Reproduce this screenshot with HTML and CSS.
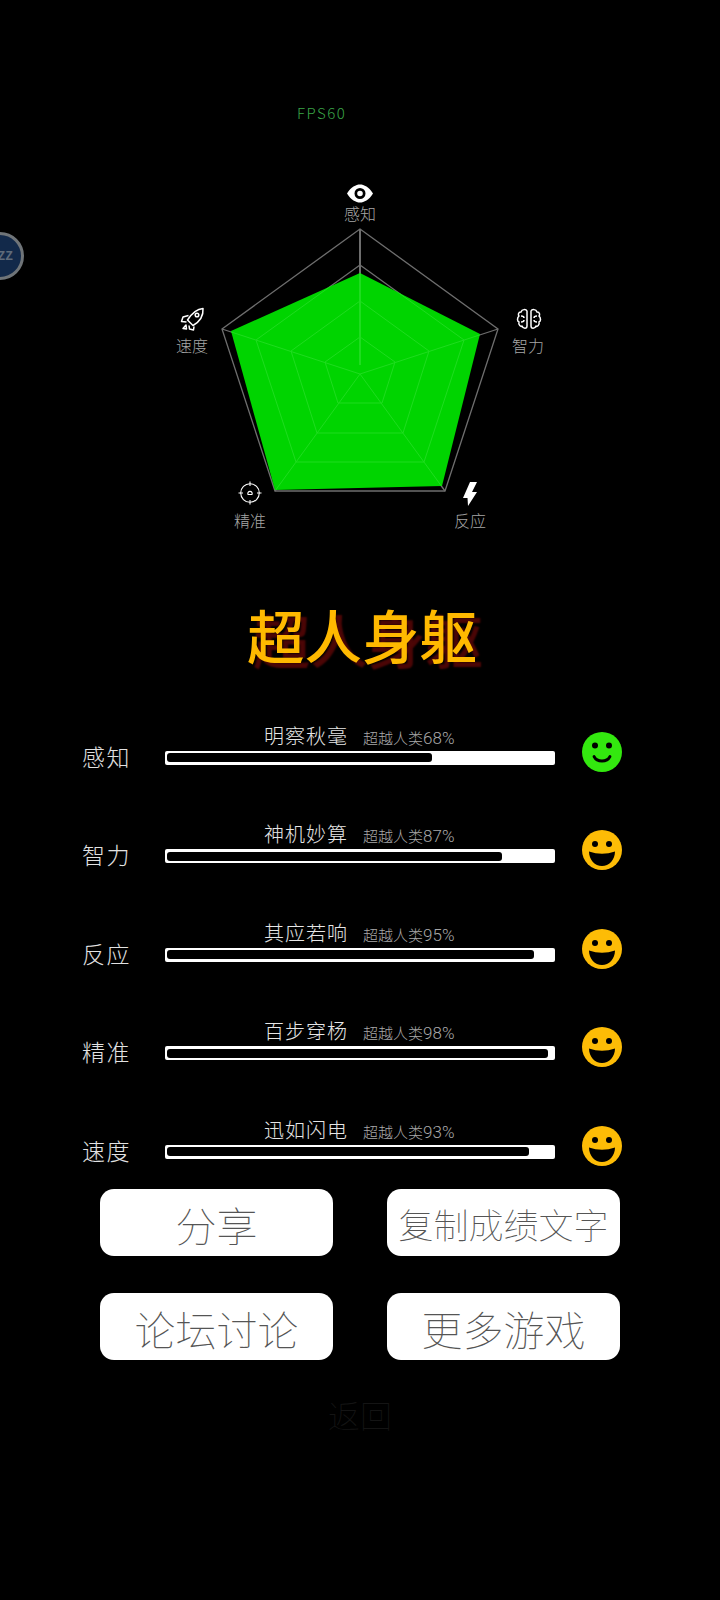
FILE: index.html
```html
<!DOCTYPE html>
<html lang="zh">
<head>
<meta charset="utf-8">
<title>超人身躯</title>
<link rel="stylesheet" href="styles.css">
</head>
<body>
<main class="screen">
  <div class="float-ball"><span class="float-text">ZZ</span></div>
  <div class="fps">FPS60</div>

  <svg class="radar" width="400" height="370" viewBox="160 170 400 370" xmlns="http://www.w3.org/2000/svg">
    <defs>
      <clipPath id="area"><polygon points="360,273 480,334 442,486 275,490 231,331"/></clipPath>
      <g id="grid">
        <polygon points="360,229 498,329 445,491 275,491 222,329"/>
        <polygon points="360,265 464,340 424,462 296,462 256,340"/>
        <polygon points="360,301 429,351 403,433 317,433 291,351"/>
        <polygon points="360,337 395,362 382,403 338,403 325,362"/>
        <path d="M360 374L498 329M360 374L445 491M360 374L275 491M360 374L222 329"/>
        <path class="spoke-top" d="M360 229V365"/>
      </g>
    </defs>
    <use href="#grid" class="grid-grey"/>
    <polygon class="area" points="360,273 480,334 442,486 275,490 231,331"/>
    <g clip-path="url(#area)"><use href="#grid" class="grid-green"/></g>

    <!-- eye -->
    <path class="ico-fill" fill-rule="evenodd" d="M347 193.500C351 187 356 184.500 360 184.500C364 184.500 369 187 373 193.500C369 200 364 202.500 360 202.500C356 202.500 351 200 347 193.500ZM360 188A5.500 5.500 0 1 0 360 199A5.500 5.500 0 1 0 360 188ZM360 190.700A2.800 2.800 0 1 1 360 196.300A2.800 2.800 0 1 1 360 190.700Z"/>
    <text class="axis" x="360" y="220">感知</text>

    <!-- brain -->
    <g class="ico-line">
      <path d="M527 311C526 309 522 309 521 312C518 312 518 315 519 316C517 318 517 321 519 322C518 325 521 327 522 326C523 329 527 329 527 326Z"/>
      <path d="M531 311C532 309 536 309 537 312C540 312 540 315 539 316C541 318 541 321 539 322C540 325 537 327 536 326C535 329 531 329 531 326Z"/>
      <path d="M521 316C523 316 524 317 524 318M537 316C535 316 534 317 534 318M521 322C523 322 524 321 524 320M537 322C535 322 534 321 534 320"/>
    </g>
    <text class="axis" x="528" y="352">智力</text>

    <!-- bolt -->
    <path class="ico-fill" d="M470 482H477L472 492H477L468 506L467.500 498H463Z"/>
    <text class="axis" x="470" y="527">反应</text>

    <!-- target -->
    <g class="ico-line thin">
      <circle cx="250" cy="493" r="9.300"/>
      <path d="M248 494.500A2.200 2.200 0 1 1 252 494.500Z"/>
      <path d="M250 481.500V486M250 500V504.500M238.500 493H243M257 493H261.500"/>
    </g>
    <text class="axis" x="250" y="527">精准</text>

    <!-- rocket -->
    <g class="ico-line">
      <path d="M203 308.500C197 309 192 313 187.500 320L193 325.500C200 321.500 203.500 315 203 308.500Z"/>
      <circle cx="197" cy="315" r="1.800"/>
      <path d="M188.500 315.500L183 317L181.500 321.500L186.500 322M194 326.500L193.500 330L189.500 329L189 325.500"/>
      <path d="M186 325L183 328.500L186.500 329Z"/>
    </g>
    <text class="axis" x="192" y="352">速度</text>
  </svg>

  <h1 class="title">超人身躯</h1>

  <section class="rows">
    <div class="row">
      <div class="row-label">感知</div>
      <div class="row-body">
        <div class="caption"><span class="cap-title">明察秋毫</span><span class="cap-sub">超越人类<span class="cap-num">68%</span></span></div>
        <div class="track"><div class="fill" style="width:68%"></div></div>
      </div>
      <svg class="face" viewBox="0 0 40 40"><circle class="face-green" cx="20" cy="20" r="20"/><circle cx="13" cy="13.500" r="3"/><circle cx="27" cy="13.500" r="3"/><path class="smile" d="M12 24.500C15 30.500 25 30.500 28 24.500"/></svg>
    </div>
    <div class="row">
      <div class="row-label">智力</div>
      <div class="row-body">
        <div class="caption"><span class="cap-title">神机妙算</span><span class="cap-sub">超越人类<span class="cap-num">87%</span></span></div>
        <div class="track"><div class="fill" style="width:86%"></div></div>
      </div>
      <svg class="face" viewBox="0 0 40 40"><circle class="face-yellow" cx="20" cy="20" r="20"/><circle cx="13" cy="14" r="3"/><circle cx="27" cy="14" r="3"/><path d="M7 21.500Q20 26 33 21.500C33 30 27 36 20 36C13 36 7 30 7 21.500Z"/></svg>
    </div>
    <div class="row">
      <div class="row-label">反应</div>
      <div class="row-body">
        <div class="caption"><span class="cap-title">其应若响</span><span class="cap-sub">超越人类<span class="cap-num">95%</span></span></div>
        <div class="track"><div class="fill" style="width:94%"></div></div>
      </div>
      <svg class="face" viewBox="0 0 40 40"><circle class="face-yellow" cx="20" cy="20" r="20"/><circle cx="13" cy="14" r="3"/><circle cx="27" cy="14" r="3"/><path d="M7 21.500Q20 26 33 21.500C33 30 27 36 20 36C13 36 7 30 7 21.500Z"/></svg>
    </div>
    <div class="row">
      <div class="row-label">精准</div>
      <div class="row-body">
        <div class="caption"><span class="cap-title">百步穿杨</span><span class="cap-sub">超越人类<span class="cap-num">98%</span></span></div>
        <div class="track"><div class="fill" style="width:97.700%"></div></div>
      </div>
      <svg class="face" viewBox="0 0 40 40"><circle class="face-yellow" cx="20" cy="20" r="20"/><circle cx="13" cy="14" r="3"/><circle cx="27" cy="14" r="3"/><path d="M7 21.500Q20 26 33 21.500C33 30 27 36 20 36C13 36 7 30 7 21.500Z"/></svg>
    </div>
    <div class="row">
      <div class="row-label">速度</div>
      <div class="row-body">
        <div class="caption"><span class="cap-title">迅如闪电</span><span class="cap-sub">超越人类<span class="cap-num">93%</span></span></div>
        <div class="track"><div class="fill" style="width:92.700%"></div></div>
      </div>
      <svg class="face" viewBox="0 0 40 40"><circle class="face-yellow" cx="20" cy="20" r="20"/><circle cx="13" cy="14" r="3"/><circle cx="27" cy="14" r="3"/><path d="M7 21.500Q20 26 33 21.500C33 30 27 36 20 36C13 36 7 30 7 21.500Z"/></svg>
    </div>
  </section>

  <section class="buttons">
    <button class="btn">分享</button>
    <button class="btn btn-small">复制成绩文字</button>
    <button class="btn">论坛讨论</button>
    <button class="btn">更多游戏</button>
  </section>

  <div class="back">返回</div>
</main>
</body>
</html>
```
FILE: styles.css
```css
* { box-sizing: border-box; }
html, body { margin: 0; padding: 0; background: #000; }
.screen {
  position: relative;
  width: 720px;
  height: 1600px;
  overflow: hidden;
  background: #000;
  font-family: "Noto Sans CJK SC", "Noto Sans", sans-serif;
  padding-top: 104px;
}
.float-ball {
  position: absolute;
  left: -24px;
  top: 232px;
  width: 48px;
  height: 48px;
  border-radius: 50%;
  border: 3.500px solid #6f7478;
  background: #12294a;
  display: flex;
  align-items: center;
  justify-content: flex-end;
  padding-right: 8px;
}
.float-text { color: #5f6b7a; font: 700 13px/1 "Liberation Mono", monospace; }
.fps {
  margin-left: 297px;
  height: 18px;
  color: #3aa548;
  font: 300 15px/18px "Noto Sans CJK SC", "Noto Sans", sans-serif;
  letter-spacing: 1.500px;
}
.radar { display: block; margin: 48px 0 0 160px; }
.grid-grey { fill: none; stroke: #6e6e6e; stroke-width: 1.300; }
.grid-green { fill: none; stroke: #1fdc1f; stroke-width: 1; }
.spoke-top { stroke-width: 2; }
.area { fill: #00d400; }
.ico-fill { fill: #fff; }
.ico-line { fill: none; stroke: #fff; stroke-width: 1.500; stroke-linejoin: round; }
.ico-line.thin { stroke-width: 1.100; }
.axis { fill: #a6a6a6; font-size: 16px; font-weight: 300; text-anchor: middle; }
.title {
  margin: 56px 0 0;
  padding-left: 4px;
  text-align: center;
  color: #ffb900;
  font-size: 57.500px;
  line-height: 76px;
  font-weight: 500;
  text-shadow: 6px 5px 2px #4c0606;
}
.rows {
  margin-top: 40.700px;
  padding-left: 82px;
  display: flex;
  flex-direction: column;
  gap: 38.500px;
}
.row { display: flex; align-items: flex-end; height: 60px; }
.row-label {
  width: 83px;
  margin-bottom: 2px;
  color: #e2e2e2;
  font-size: 23px;
  line-height: 30px;
  font-weight: 300;
  letter-spacing: 1.500px;
}
.row-body { width: 390px; margin-bottom: 8px; }
.caption { display: flex; align-items: baseline; height: 29px; padding-left: 99px; }
.cap-title {
  width: 84px;
  color: #e6e6e6;
  font-size: 20px;
  line-height: 28px;
  font-weight: 300;
  white-space: nowrap;
  letter-spacing: 1px;
}
.cap-sub {
  margin-left: 15px;
  color: #a8a8a8;
  font-size: 15px;
  line-height: 28px;
  font-weight: 300;
  white-space: nowrap;
}
.cap-num { font-family: Roboto, "Noto Sans", sans-serif; font-size: 17px; font-weight: 300; }
.track {
  height: 14px;
  padding: 2.500px 0;
  background: #fff;
  border-radius: 2px;
}
.fill {
  height: 9px;
  margin-left: 2px;
  background: #000;
  border-radius: 3px;
}
.face { width: 40px; height: 40px; margin-left: 27px; margin-bottom: 1px; flex: none; }
.face-green { fill: #33e80f; }
.face-yellow { fill: #fdbc06; }
.smile { fill: none; stroke: #000; stroke-width: 2.800; stroke-linecap: round; }
.buttons {
  margin: 22.400px 0 0 100px;
  display: grid;
  grid-template-columns: 233px 233px;
  column-gap: 54px;
  row-gap: 37px;
}
.btn {
  height: 67px;
  padding: 2px 0 0;
  border: 0;
  border-radius: 14px;
  background: #fff;
  color: #555;
  font-family: inherit;
  font-size: 41px;
  font-weight: 100;
  white-space: nowrap;
}
.btn-small { font-size: 35px; }
.back {
  margin-top: 31px;
  text-align: center;
  color: #141414;
  font-size: 32px;
  line-height: 46px;
  font-weight: 100;
}
```
